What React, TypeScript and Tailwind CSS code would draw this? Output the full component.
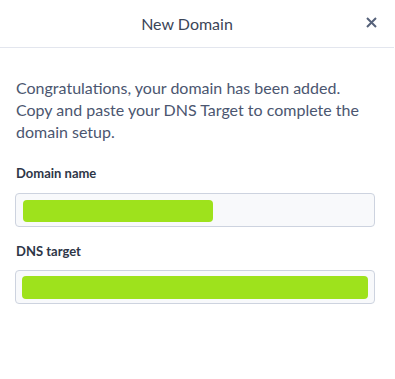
export default function App() {
  return (
    <div className="w-[395px] h-[379px] bg-white font-['Lato','Noto_Sans',sans-serif]">
      <div className="relative h-[48px] w-[394px] border-b border-[#e3e6ee] flex items-center justify-center pr-[20px]">
        <h1 className="text-[16px] text-[#3b4558]">New Domain</h1>
        <button className="absolute right-[17px] top-[17px] text-[#56627a]" aria-label="Close">
          <svg width="11" height="11" viewBox="0 0 11 11" fill="none" stroke="currentColor" strokeWidth={2}>
            <path d="M1 1l9 9M10 1l-9 9" />
          </svg>
        </button>
      </div>

      <div className="px-[15px] pt-[29px]">
        <p className="text-[16px] leading-[22px] text-[#4b5670] pl-px">
          Congratulations, your domain has been added. Copy and paste your DNS Target to complete the domain setup.
        </p>

        <label className="block mt-[21px] text-[13px] font-bold text-[#2e3647] pl-px">Domain name</label>
        <div className="mt-[9px] w-[360px] h-[34px] rounded-[4px] border border-[#cdd3df] bg-[#f8f9fb] px-[7px] py-[6px]">
          <div className="w-[190px] h-[22px] rounded-[4px] bg-[#9ee21c]" />
        </div>

        <label className="block mt-[15px] text-[13px] font-bold text-[#2e3647] pl-px">DNS target</label>
        <div className="mt-[9px] w-[360px] h-[34px] rounded-[4px] border border-[#cdd3df] bg-[#f8f9fb] px-[6px] py-[5px]">
          <div className="w-full h-[23px] rounded-[4px] bg-[#9ee21c]" />
        </div>
      </div>
    </div>
  );
}
